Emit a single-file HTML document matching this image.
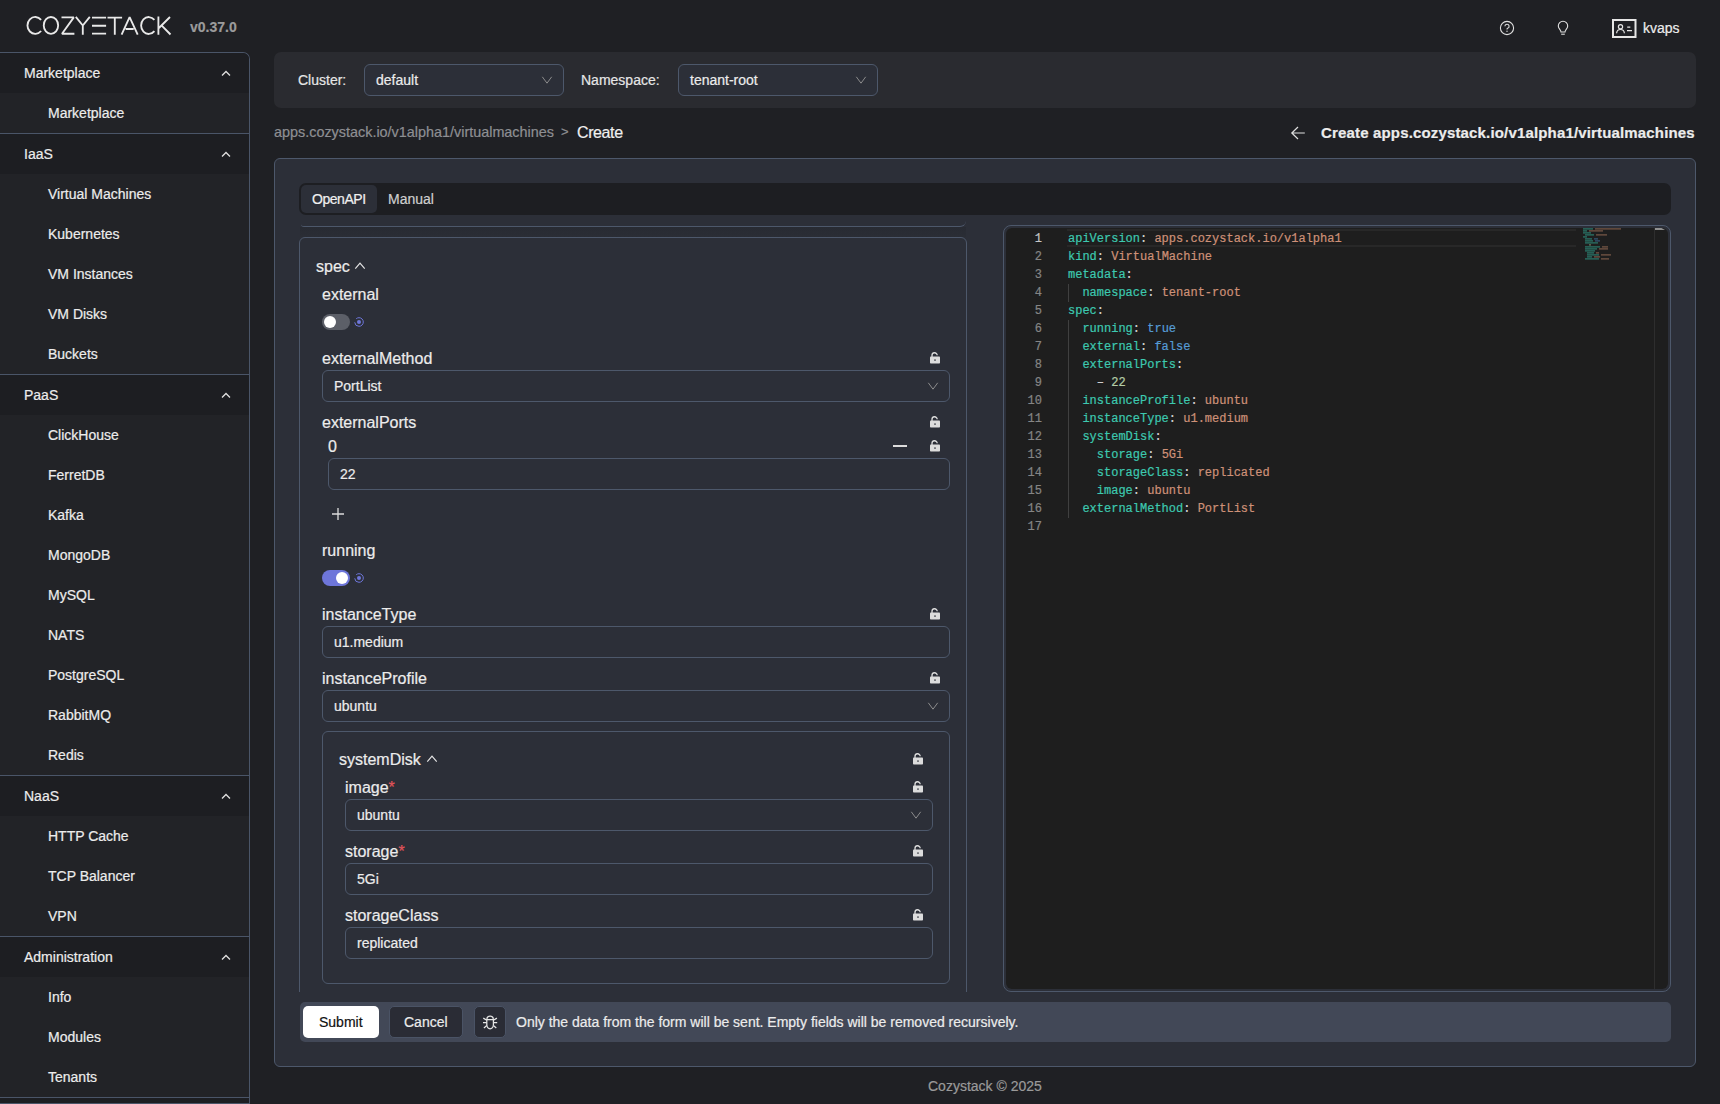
<!DOCTYPE html>
<html><head><meta charset="utf-8"><style>
*{box-sizing:border-box}
html,body{margin:0;padding:0}
body{width:1720px;height:1104px;overflow:hidden;-webkit-text-stroke:0.2px currentColor;background:#1f2024;font-family:"Liberation Sans",sans-serif;color:#e6e6e6;position:relative;font-size:14px}
.abs{position:absolute}
.t{position:absolute;white-space:nowrap;line-height:1}
#sb{position:absolute;left:0;top:52px;width:250px;height:1060px;border-right:1px solid #4a5568;border-top:1px solid #4a5568;border-top-right-radius:7px;background:#222327;overflow:hidden}
.sh{position:absolute;left:0;width:249px;height:40px;background:#1d1e22}
.sh span{position:absolute;left:24px;top:13px;font-size:14px;color:#ececec;line-height:1}
.sh svg{position:absolute;left:220px;top:16px}
.si{position:absolute;left:48px;font-size:14px;color:#ececec;line-height:1;white-space:nowrap}
.dv{position:absolute;left:0;width:249px;height:1px;background:#4a5568}
.box{position:absolute;border:1px solid #4d586b;border-radius:6px}
.inp{position:absolute;border:1px solid #4d586b;border-radius:6px;background:#2c2f38}
.inp span{position:absolute;left:11px;top:8px;font-size:14px;line-height:1;color:#ececec;white-space:nowrap}
.lbl{position:absolute;font-size:16px;line-height:1;color:#ececec;white-space:nowrap}
.req{color:#e0545a}
.ed{position:absolute;font-family:"Liberation Mono",monospace;font-size:12px;line-height:18px;white-space:pre}
.k{color:#3dc9b0}.s{color:#ce9178}.b{color:#569cd6}.n{color:#b5cea8}.p{color:#d4d4d4}
</style></head><body>

<svg class="abs" style="left:0;top:0" width="180" height="52" viewBox="0 0 180 52">
<g fill="none" stroke="#e9e9e9" stroke-width="1.85" stroke-linejoin="bevel">
<path d="M41.1 19.8 A7.8 8.45 0 1 0 41.1 31.0"/>
<ellipse cx="50.95" cy="25.4" rx="7.2" ry="8.4"/>
<path d="M61.5 17.4 H73.8 L62 33.7 H74.4"/>
<path d="M75.8 16.8 L82.8 25.5 L89.8 16.8 M82.8 25.5 V34.7"/>
<path d="M92 17.66 H106.1 M92 25.7 H106.1 M92 33.6 H106.1"/>
<path d="M107.5 17.66 H122.1 M114.8 17.66 V34.7"/>
<path d="M121.6 34.7 L129.6 17.2 L137.7 34.7 M125.6 29 H133.7"/>
<path d="M154.4 19.9 A7.6 8.45 0 1 0 154.4 31.1"/>
<path d="M158.4 16.5 V34.7 M170 17 L158.9 28 M161.5 25.3 L170.5 34.5"/>
</g>
</svg>
<div class="t" style="left:190px;top:20px;font-size:14px;font-weight:700;color:#9b9b9b">v0.37.0</div>
<svg class="abs" style="left:1498px;top:19px" width="18" height="18" viewBox="0 0 18 18"><circle cx="9" cy="9" r="6.6" fill="none" stroke="#e0e0e0" stroke-width="1.1"/><path d="M6.9 7.3 A2.1 2.1 0 1 1 9.6 9.3 C9.1 9.5 9 9.8 9 10.5" fill="none" stroke="#e0e0e0" stroke-width="1.1"/><circle cx="9" cy="12.3" r="0.7" fill="#e0e0e0"/></svg>
<svg class="abs" style="left:1554px;top:19px" width="18" height="18" viewBox="0 0 18 18"><path d="M7 13 C7 11 4.3 9.5 4.3 6.9 A4.7 4.7 0 0 1 13.7 6.9 C13.7 9.5 11 11 11 13 Z" fill="none" stroke="#e0e0e0" stroke-width="1.1"/><path d="M7.2 15.2 H10.8" stroke="#e0e0e0" stroke-width="1.1"/></svg>
<svg class="abs" style="left:1610px;top:17px" width="28" height="22" viewBox="0 0 28 22"><rect x="3" y="3" width="22.5" height="17" fill="none" stroke="#e6e6e6" stroke-width="2"/><circle cx="10.5" cy="9.7" r="2.1" fill="none" stroke="#e6e6e6" stroke-width="1.2"/><path d="M6.6 16.2 C6.8 13.6 8.4 12.5 10.5 12.5 C12.6 12.5 14.2 13.6 14.4 16.2" fill="none" stroke="#e6e6e6" stroke-width="1.2"/><path d="M17.2 10.1 H20.3 M17 13.6 H22" stroke="#e6e6e6" stroke-width="1.3"/></svg>
<div class="t" style="left:1643px;top:21px;font-size:14px;color:#ececec">kvaps</div>

<div id="sb"><div class="sh" style="top:0px"><span>Marketplace</span><svg width="12" height="8" viewBox="0 0 12 8"><path d="M2 6.5 L6 2.5 L10 6.5" fill="none" stroke="#e0e0e0" stroke-width="1.3"/></svg></div>
<div class="si" style="top:53px">Marketplace</div>
<div class="dv" style="top:80px"></div>
<div class="sh" style="top:81px"><span>IaaS</span><svg width="12" height="8" viewBox="0 0 12 8"><path d="M2 6.5 L6 2.5 L10 6.5" fill="none" stroke="#e0e0e0" stroke-width="1.3"/></svg></div>
<div class="si" style="top:134px">Virtual Machines</div>
<div class="si" style="top:174px">Kubernetes</div>
<div class="si" style="top:214px">VM Instances</div>
<div class="si" style="top:254px">VM Disks</div>
<div class="si" style="top:294px">Buckets</div>
<div class="dv" style="top:321px"></div>
<div class="sh" style="top:322px"><span>PaaS</span><svg width="12" height="8" viewBox="0 0 12 8"><path d="M2 6.5 L6 2.5 L10 6.5" fill="none" stroke="#e0e0e0" stroke-width="1.3"/></svg></div>
<div class="si" style="top:375px">ClickHouse</div>
<div class="si" style="top:415px">FerretDB</div>
<div class="si" style="top:455px">Kafka</div>
<div class="si" style="top:495px">MongoDB</div>
<div class="si" style="top:535px">MySQL</div>
<div class="si" style="top:575px">NATS</div>
<div class="si" style="top:615px">PostgreSQL</div>
<div class="si" style="top:655px">RabbitMQ</div>
<div class="si" style="top:695px">Redis</div>
<div class="dv" style="top:722px"></div>
<div class="sh" style="top:723px"><span>NaaS</span><svg width="12" height="8" viewBox="0 0 12 8"><path d="M2 6.5 L6 2.5 L10 6.5" fill="none" stroke="#e0e0e0" stroke-width="1.3"/></svg></div>
<div class="si" style="top:776px">HTTP Cache</div>
<div class="si" style="top:816px">TCP Balancer</div>
<div class="si" style="top:856px">VPN</div>
<div class="dv" style="top:883px"></div>
<div class="sh" style="top:884px"><span>Administration</span><svg width="12" height="8" viewBox="0 0 12 8"><path d="M2 6.5 L6 2.5 L10 6.5" fill="none" stroke="#e0e0e0" stroke-width="1.3"/></svg></div>
<div class="si" style="top:937px">Info</div>
<div class="si" style="top:977px">Modules</div>
<div class="si" style="top:1017px">Tenants</div>
<div class="dv" style="top:1044px"></div>
<div class="sh" style="top:1045px"></div>
<div class="dv" style="top:1050px"></div></div>
<div class="abs" style="left:274px;top:52px;width:1422px;height:56px;background:#2a2b30;border-radius:7px"></div>
<div class="t" style="left:298px;top:73px;font-size:14px;color:#e6e6e6">Cluster:</div>
<div class="inp" style="left:364px;top:64px;width:200px;height:32px"><span>default</span></div>
<svg class="abs" style="left:541px;top:76px" width="12" height="8" viewBox="0 0 12 8"><path d="M1.3 0.8 L6 7.2 L10.7 0.8" fill="none" stroke="#909090" stroke-width="0.95"/></svg>
<div class="t" style="left:581px;top:73px;font-size:14px;color:#e6e6e6">Namespace:</div>
<div class="inp" style="left:678px;top:64px;width:200px;height:32px"><span>tenant-root</span></div>
<svg class="abs" style="left:855px;top:76px" width="12" height="8" viewBox="0 0 12 8"><path d="M1.3 0.8 L6 7.2 L10.7 0.8" fill="none" stroke="#909090" stroke-width="0.95"/></svg>
<div class="t" style="left:274px;top:125px;font-size:14.4px;color:#8e8f93">apps.cozystack.io/v1alpha1/virtualmachines</div>
<div class="t" style="left:561px;top:125px;font-size:13px;color:#8e8f93">&gt;</div>
<div class="t" style="left:577px;top:125px;font-size:16px;letter-spacing:-0.4px;color:#f0f0f0">Create</div>
<svg class="abs" style="left:1290px;top:126px" width="16" height="14" viewBox="0 0 16 14"><path d="M8 1 L1.8 7 L8 13 M1.8 7 H14.8" fill="none" stroke="#e0e0e0" stroke-width="1.2"/></svg>
<div class="t" style="left:1321px;top:125px;font-size:15px;font-weight:700;letter-spacing:0.16px;color:#ececec">Create apps.cozystack.io/v1alpha1/virtualmachines</div>
<div class="abs" style="left:274px;top:158px;width:1422px;height:909px;background:#2c2f38;border:1px solid #4d586b;border-radius:6px"></div>
<div class="abs" style="left:299px;top:183px;width:1372px;height:32px;background:#1d1e22;border-radius:7px"></div>
<div class="abs" style="left:301px;top:185px;width:76px;height:28px;background:#2c2f38;border-radius:5px"></div>
<div class="t" style="left:312px;top:192px;font-size:14px;letter-spacing:-0.45px;color:#f0f0f0">OpenAPI</div>
<div class="t" style="left:388px;top:192px;font-size:14px;color:#cfcfcf">Manual</div>
<div class="abs" style="left:300px;top:1002px;width:1371px;height:40px;background:#424857;border-radius:5px"></div>
<div class="abs" style="left:303px;top:1006px;width:76px;height:32px;background:#ffffff;border-radius:5px"></div>
<div class="t" style="left:319px;top:1015px;font-size:14px;color:#111">Submit</div>
<div class="abs" style="left:389px;top:1006px;width:74px;height:32px;background:#2a2c35;border:1px solid #4a5365;border-radius:5px"></div>
<div class="t" style="left:404px;top:1015px;font-size:14px;color:#ececec">Cancel</div>
<div class="abs" style="left:474px;top:1006px;width:32px;height:32px;background:#2a2c35;border:1px solid #4a5365;border-radius:5px"></div>
<svg class="abs" style="left:481px;top:1013px" width="18" height="18" viewBox="0 0 18 18"><g fill="none" stroke="#e6e6e6" stroke-width="1.25"><path d="M5.9 6.3 A3.2 3.3 0 0 1 12.3 6.3"/><path d="M5.8 6.6 H12.4 V11.6 A3.3 4.2 0 0 1 5.8 11.6 Z"/><path d="M2 9.5 H5.8 M12.4 9.5 H16.2 M2.3 5.1 L5.8 7.3 M15.9 5.1 L12.4 7.3 M2.9 14.9 L5.8 12.5 M15.3 14.9 L12.4 12.5"/></g></svg>
<div class="t" style="left:516px;top:1015px;font-size:14px;color:#ececec">Only the data from the form will be sent. Empty fields will be removed recursively.</div>
<div class="t" style="left:928px;top:1079px;font-size:14px;color:#9a9a9a">Cozystack © 2025</div>
<div class="abs" style="left:298px;top:215px;width:670px;height:777px;overflow:hidden">
<div class="abs" style="left:3px;top:-65px;width:665px;height:77px;border-bottom:1px solid #4d586b;border-radius:0 0 6px 3px"></div>
<div class="abs" style="left:2px;top:12px;width:666px;height:10px;background:linear-gradient(#282b33,#2a2d35)"></div>
<div class="box" style="left:1px;top:22px;width:668px;height:900px;"></div>
<div class="lbl" style="left:18px;top:44px">spec</div>
<svg class="abs" style="left:56px;top:46px" width="12" height="9" viewBox="0 0 12 9"><path d="M1.3 7.6 L6 2.2 L10.7 7.6" fill="none" stroke="#e6e6e6" stroke-width="1.15"/></svg>
<div class="lbl" style="left:24px;top:72px">external</div>
<div class="abs" style="left:24px;top:99px;width:28px;height:16px;background:#5c5f68;border-radius:8px"></div>
<div class="abs" style="left:26px;top:101px;width:12px;height:12px;background:#fff;border-radius:6px"></div>
<svg class="abs" style="left:55px;top:101px" width="12" height="12" viewBox="0 0 12 12"><circle cx="6" cy="6" r="4.3" fill="none" stroke="#6e76da" stroke-width="1" stroke-dasharray="23 4" stroke-dashoffset="10.2"/><circle cx="6" cy="6" r="2" fill="#6e76da"/></svg>
<div class="lbl" style="left:24px;top:136px">externalMethod</div>
<svg class="abs" style="left:631px;top:136px" width="12" height="13" viewBox="0 0 12 13"><path d="M3 6 V4.5 A2.6 2.6 0 0 1 8.2 4.2" fill="none" stroke="#dcdcdc" stroke-width="1.3"/><rect x="1" y="5.6" width="10" height="7" rx="0.8" fill="#dcdcdc"/><rect x="5.3" y="8.4" width="1.4" height="1.4" fill="#2c2f38"/></svg>
<div class="inp" style="left:24px;top:155px;width:628px;height:32px;"><span>PortList</span></div>
<svg class="abs" style="left:629px;top:167px" width="12" height="8" viewBox="0 0 12 8"><path d="M1.3 0.8 L6 7.2 L10.7 0.8" fill="none" stroke="#909090" stroke-width="0.95"/></svg>
<div class="lbl" style="left:24px;top:200px">externalPorts</div>
<svg class="abs" style="left:631px;top:200px" width="12" height="13" viewBox="0 0 12 13"><path d="M3 6 V4.5 A2.6 2.6 0 0 1 8.2 4.2" fill="none" stroke="#dcdcdc" stroke-width="1.3"/><rect x="1" y="5.6" width="10" height="7" rx="0.8" fill="#dcdcdc"/><rect x="5.3" y="8.4" width="1.4" height="1.4" fill="#2c2f38"/></svg>
<div class="lbl" style="left:30px;top:224px">0</div>
<div class="abs" style="left:595px;top:230px;width:14px;height:2px;background:#dcdcdc"></div>
<svg class="abs" style="left:631px;top:224px" width="12" height="13" viewBox="0 0 12 13"><path d="M3 6 V4.5 A2.6 2.6 0 0 1 8.2 4.2" fill="none" stroke="#dcdcdc" stroke-width="1.3"/><rect x="1" y="5.6" width="10" height="7" rx="0.8" fill="#dcdcdc"/><rect x="5.3" y="8.4" width="1.4" height="1.4" fill="#2c2f38"/></svg>
<div class="inp" style="left:30px;top:243px;width:622px;height:32px;"><span>22</span></div>
<svg class="abs" style="left:33px;top:292px" width="14" height="14" viewBox="0 0 14 14"><path d="M7 1 V13 M1 7 H13" stroke="#dcdcdc" stroke-width="1.3"/></svg>
<div class="lbl" style="left:24px;top:328px">running</div>
<div class="abs" style="left:24px;top:355px;width:28px;height:16px;background:#6e76da;border-radius:8px"></div>
<div class="abs" style="left:38px;top:357px;width:12px;height:12px;background:#fff;border-radius:6px"></div>
<svg class="abs" style="left:55px;top:357px" width="12" height="12" viewBox="0 0 12 12"><circle cx="6" cy="6" r="4.3" fill="none" stroke="#6e76da" stroke-width="1" stroke-dasharray="23 4" stroke-dashoffset="10.2"/><circle cx="6" cy="6" r="2" fill="#6e76da"/></svg>
<div class="lbl" style="left:24px;top:392px">instanceType</div>
<svg class="abs" style="left:631px;top:392px" width="12" height="13" viewBox="0 0 12 13"><path d="M3 6 V4.5 A2.6 2.6 0 0 1 8.2 4.2" fill="none" stroke="#dcdcdc" stroke-width="1.3"/><rect x="1" y="5.6" width="10" height="7" rx="0.8" fill="#dcdcdc"/><rect x="5.3" y="8.4" width="1.4" height="1.4" fill="#2c2f38"/></svg>
<div class="inp" style="left:24px;top:411px;width:628px;height:32px;"><span>u1.medium</span></div>
<div class="lbl" style="left:24px;top:456px">instanceProfile</div>
<svg class="abs" style="left:631px;top:456px" width="12" height="13" viewBox="0 0 12 13"><path d="M3 6 V4.5 A2.6 2.6 0 0 1 8.2 4.2" fill="none" stroke="#dcdcdc" stroke-width="1.3"/><rect x="1" y="5.6" width="10" height="7" rx="0.8" fill="#dcdcdc"/><rect x="5.3" y="8.4" width="1.4" height="1.4" fill="#2c2f38"/></svg>
<div class="inp" style="left:24px;top:475px;width:628px;height:32px;"><span>ubuntu</span></div>
<svg class="abs" style="left:629px;top:487px" width="12" height="8" viewBox="0 0 12 8"><path d="M1.3 0.8 L6 7.2 L10.7 0.8" fill="none" stroke="#909090" stroke-width="0.95"/></svg>
<div class="box" style="left:24px;top:516px;width:628px;height:253px;"></div>
<div class="lbl" style="left:41px;top:537px">systemDisk</div>
<svg class="abs" style="left:128px;top:539px" width="12" height="9" viewBox="0 0 12 9"><path d="M1.3 7.6 L6 2.2 L10.7 7.6" fill="none" stroke="#e6e6e6" stroke-width="1.15"/></svg>
<svg class="abs" style="left:614px;top:537px" width="12" height="13" viewBox="0 0 12 13"><path d="M3 6 V4.5 A2.6 2.6 0 0 1 8.2 4.2" fill="none" stroke="#dcdcdc" stroke-width="1.3"/><rect x="1" y="5.6" width="10" height="7" rx="0.8" fill="#dcdcdc"/><rect x="5.3" y="8.4" width="1.4" height="1.4" fill="#2c2f38"/></svg>
<div class="lbl" style="left:47px;top:565px">image<span class="req">*</span></div>
<svg class="abs" style="left:614px;top:565px" width="12" height="13" viewBox="0 0 12 13"><path d="M3 6 V4.5 A2.6 2.6 0 0 1 8.2 4.2" fill="none" stroke="#dcdcdc" stroke-width="1.3"/><rect x="1" y="5.6" width="10" height="7" rx="0.8" fill="#dcdcdc"/><rect x="5.3" y="8.4" width="1.4" height="1.4" fill="#2c2f38"/></svg>
<div class="inp" style="left:47px;top:584px;width:588px;height:32px;"><span>ubuntu</span></div>
<svg class="abs" style="left:612px;top:596px" width="12" height="8" viewBox="0 0 12 8"><path d="M1.3 0.8 L6 7.2 L10.7 0.8" fill="none" stroke="#909090" stroke-width="0.95"/></svg>
<div class="lbl" style="left:47px;top:629px">storage<span class="req">*</span></div>
<svg class="abs" style="left:614px;top:629px" width="12" height="13" viewBox="0 0 12 13"><path d="M3 6 V4.5 A2.6 2.6 0 0 1 8.2 4.2" fill="none" stroke="#dcdcdc" stroke-width="1.3"/><rect x="1" y="5.6" width="10" height="7" rx="0.8" fill="#dcdcdc"/><rect x="5.3" y="8.4" width="1.4" height="1.4" fill="#2c2f38"/></svg>
<div class="inp" style="left:47px;top:648px;width:588px;height:32px;"><span>5Gi</span></div>
<div class="lbl" style="left:47px;top:693px">storageClass</div>
<svg class="abs" style="left:614px;top:693px" width="12" height="13" viewBox="0 0 12 13"><path d="M3 6 V4.5 A2.6 2.6 0 0 1 8.2 4.2" fill="none" stroke="#dcdcdc" stroke-width="1.3"/><rect x="1" y="5.6" width="10" height="7" rx="0.8" fill="#dcdcdc"/><rect x="5.3" y="8.4" width="1.4" height="1.4" fill="#2c2f38"/></svg>
<div class="inp" style="left:47px;top:712px;width:588px;height:32px;"><span>replicated</span></div>
</div>
<div class="abs" style="left:1003px;top:225px;width:668px;height:767px;border:1px solid #4d586b;border-radius:8px;background:#2c2f38"></div>
<div class="abs" style="left:1006px;top:228px;width:662px;height:761px;background:#1e1e1e;border-radius:6px;overflow:hidden"></div>
<div class="abs" style="left:1067px;top:229px;width:509px;height:18px;border-top:2px solid #282828;border-bottom:2px solid #282828"></div>
<div class="ed" style="left:1006px;top:230px;width:36px;text-align:right;color:#858585"><span style="color:#c6c6c6">1</span>
2
3
4
5
6
7
8
9
10
11
12
13
14
15
16
17</div>
<div class="ed" style="left:1068px;top:230px"><span class="k">apiVersion</span><span class="p">: </span><span class="s">apps.cozystack.io/v1alpha1</span>
<span class="k">kind</span><span class="p">: </span><span class="s">VirtualMachine</span>
<span class="k">metadata</span><span class="p">:</span>
  <span class="k">namespace</span><span class="p">: </span><span class="s">tenant-root</span>
<span class="k">spec</span><span class="p">:</span>
  <span class="k">running</span><span class="p">: </span><span class="b">true</span>
  <span class="k">external</span><span class="p">: </span><span class="b">false</span>
  <span class="k">externalPorts</span><span class="p">:</span>
    <span class="p">&#8211; </span><span class="n">22</span>
  <span class="k">instanceProfile</span><span class="p">: </span><span class="s">ubuntu</span>
  <span class="k">instanceType</span><span class="p">: </span><span class="s">u1.medium</span>
  <span class="k">systemDisk</span><span class="p">:</span>
    <span class="k">storage</span><span class="p">: </span><span class="s">5Gi</span>
    <span class="k">storageClass</span><span class="p">: </span><span class="s">replicated</span>
    <span class="k">image</span><span class="p">: </span><span class="s">ubuntu</span>
  <span class="k">externalMethod</span><span class="p">: </span><span class="s">PortList</span>
</div>
<div class="abs" style="left:1068px;top:284px;width:1px;height:18px;background:#404040"></div>
<div class="abs" style="left:1068px;top:320px;width:1px;height:198px;background:#404040"></div>
<svg class="abs" style="left:1583px;top:228px" width="60" height="40" viewBox="0 0 60 40"><g opacity="0.62"><rect x="0" y="0" width="0.85" height="1.7" fill="#2f9c89"/><rect x="1" y="0" width="0.85" height="1.7" fill="#2f9c89"/><rect x="2" y="0" width="0.85" height="1.7" fill="#2f9c89"/><rect x="3" y="0" width="0.85" height="1.7" fill="#2f9c89"/><rect x="4" y="0" width="0.85" height="1.7" fill="#2f9c89"/><rect x="5" y="0" width="0.85" height="1.7" fill="#2f9c89"/><rect x="6" y="0" width="0.85" height="1.7" fill="#2f9c89"/><rect x="7" y="0" width="0.85" height="1.7" fill="#2f9c89"/><rect x="8" y="0" width="0.85" height="1.7" fill="#2f9c89"/><rect x="9" y="0" width="0.85" height="1.7" fill="#2f9c89"/><rect x="12" y="0" width="0.85" height="1.7" fill="#9c6f58"/><rect x="13" y="0" width="0.85" height="1.7" fill="#9c6f58"/><rect x="14" y="0" width="0.85" height="1.7" fill="#9c6f58"/><rect x="15" y="0" width="0.85" height="1.7" fill="#9c6f58"/><rect x="16" y="0" width="0.85" height="1.7" fill="#9c6f58"/><rect x="17" y="0" width="0.85" height="1.7" fill="#9c6f58"/><rect x="18" y="0" width="0.85" height="1.7" fill="#9c6f58"/><rect x="19" y="0" width="0.85" height="1.7" fill="#9c6f58"/><rect x="20" y="0" width="0.85" height="1.7" fill="#9c6f58"/><rect x="21" y="0" width="0.85" height="1.7" fill="#9c6f58"/><rect x="22" y="0" width="0.85" height="1.7" fill="#9c6f58"/><rect x="23" y="0" width="0.85" height="1.7" fill="#9c6f58"/><rect x="24" y="0" width="0.85" height="1.7" fill="#9c6f58"/><rect x="25" y="0" width="0.85" height="1.7" fill="#9c6f58"/><rect x="26" y="0" width="0.85" height="1.7" fill="#9c6f58"/><rect x="27" y="0" width="0.85" height="1.7" fill="#9c6f58"/><rect x="28" y="0" width="0.85" height="1.7" fill="#9c6f58"/><rect x="29" y="0" width="0.85" height="1.7" fill="#9c6f58"/><rect x="30" y="0" width="0.85" height="1.7" fill="#9c6f58"/><rect x="31" y="0" width="0.85" height="1.7" fill="#9c6f58"/><rect x="32" y="0" width="0.85" height="1.7" fill="#9c6f58"/><rect x="33" y="0" width="0.85" height="1.7" fill="#9c6f58"/><rect x="34" y="0" width="0.85" height="1.7" fill="#9c6f58"/><rect x="35" y="0" width="0.85" height="1.7" fill="#9c6f58"/><rect x="36" y="0" width="0.85" height="1.7" fill="#9c6f58"/><rect x="37" y="0" width="0.85" height="1.7" fill="#9c6f58"/><rect x="0" y="2" width="0.85" height="1.7" fill="#2f9c89"/><rect x="1" y="2" width="0.85" height="1.7" fill="#2f9c89"/><rect x="2" y="2" width="0.85" height="1.7" fill="#2f9c89"/><rect x="3" y="2" width="0.85" height="1.7" fill="#2f9c89"/><rect x="6" y="2" width="0.85" height="1.7" fill="#9c6f58"/><rect x="7" y="2" width="0.85" height="1.7" fill="#9c6f58"/><rect x="8" y="2" width="0.85" height="1.7" fill="#9c6f58"/><rect x="9" y="2" width="0.85" height="1.7" fill="#9c6f58"/><rect x="10" y="2" width="0.85" height="1.7" fill="#9c6f58"/><rect x="11" y="2" width="0.85" height="1.7" fill="#9c6f58"/><rect x="12" y="2" width="0.85" height="1.7" fill="#9c6f58"/><rect x="13" y="2" width="0.85" height="1.7" fill="#9c6f58"/><rect x="14" y="2" width="0.85" height="1.7" fill="#9c6f58"/><rect x="15" y="2" width="0.85" height="1.7" fill="#9c6f58"/><rect x="16" y="2" width="0.85" height="1.7" fill="#9c6f58"/><rect x="17" y="2" width="0.85" height="1.7" fill="#9c6f58"/><rect x="18" y="2" width="0.85" height="1.7" fill="#9c6f58"/><rect x="19" y="2" width="0.85" height="1.7" fill="#9c6f58"/><rect x="0" y="4" width="0.85" height="1.7" fill="#2f9c89"/><rect x="1" y="4" width="0.85" height="1.7" fill="#2f9c89"/><rect x="2" y="4" width="0.85" height="1.7" fill="#2f9c89"/><rect x="3" y="4" width="0.85" height="1.7" fill="#2f9c89"/><rect x="4" y="4" width="0.85" height="1.7" fill="#2f9c89"/><rect x="5" y="4" width="0.85" height="1.7" fill="#2f9c89"/><rect x="6" y="4" width="0.85" height="1.7" fill="#2f9c89"/><rect x="7" y="4" width="0.85" height="1.7" fill="#2f9c89"/><rect x="2" y="6" width="0.85" height="1.7" fill="#2f9c89"/><rect x="3" y="6" width="0.85" height="1.7" fill="#2f9c89"/><rect x="4" y="6" width="0.85" height="1.7" fill="#2f9c89"/><rect x="5" y="6" width="0.85" height="1.7" fill="#2f9c89"/><rect x="6" y="6" width="0.85" height="1.7" fill="#2f9c89"/><rect x="7" y="6" width="0.85" height="1.7" fill="#2f9c89"/><rect x="8" y="6" width="0.85" height="1.7" fill="#2f9c89"/><rect x="9" y="6" width="0.85" height="1.7" fill="#2f9c89"/><rect x="10" y="6" width="0.85" height="1.7" fill="#2f9c89"/><rect x="13" y="6" width="0.85" height="1.7" fill="#9c6f58"/><rect x="14" y="6" width="0.85" height="1.7" fill="#9c6f58"/><rect x="15" y="6" width="0.85" height="1.7" fill="#9c6f58"/><rect x="16" y="6" width="0.85" height="1.7" fill="#9c6f58"/><rect x="17" y="6" width="0.85" height="1.7" fill="#9c6f58"/><rect x="18" y="6" width="0.85" height="1.7" fill="#9c6f58"/><rect x="19" y="6" width="0.85" height="1.7" fill="#9c6f58"/><rect x="20" y="6" width="0.85" height="1.7" fill="#9c6f58"/><rect x="21" y="6" width="0.85" height="1.7" fill="#9c6f58"/><rect x="22" y="6" width="0.85" height="1.7" fill="#9c6f58"/><rect x="23" y="6" width="0.85" height="1.7" fill="#9c6f58"/><rect x="0" y="8" width="0.85" height="1.7" fill="#2f9c89"/><rect x="1" y="8" width="0.85" height="1.7" fill="#2f9c89"/><rect x="2" y="8" width="0.85" height="1.7" fill="#2f9c89"/><rect x="3" y="8" width="0.85" height="1.7" fill="#2f9c89"/><rect x="2" y="10" width="0.85" height="1.7" fill="#2f9c89"/><rect x="3" y="10" width="0.85" height="1.7" fill="#2f9c89"/><rect x="4" y="10" width="0.85" height="1.7" fill="#2f9c89"/><rect x="5" y="10" width="0.85" height="1.7" fill="#2f9c89"/><rect x="6" y="10" width="0.85" height="1.7" fill="#2f9c89"/><rect x="7" y="10" width="0.85" height="1.7" fill="#2f9c89"/><rect x="8" y="10" width="0.85" height="1.7" fill="#2f9c89"/><rect x="11" y="10" width="0.85" height="1.7" fill="#3f6f9c"/><rect x="12" y="10" width="0.85" height="1.7" fill="#3f6f9c"/><rect x="13" y="10" width="0.85" height="1.7" fill="#3f6f9c"/><rect x="14" y="10" width="0.85" height="1.7" fill="#3f6f9c"/><rect x="2" y="12" width="0.85" height="1.7" fill="#2f9c89"/><rect x="3" y="12" width="0.85" height="1.7" fill="#2f9c89"/><rect x="4" y="12" width="0.85" height="1.7" fill="#2f9c89"/><rect x="5" y="12" width="0.85" height="1.7" fill="#2f9c89"/><rect x="6" y="12" width="0.85" height="1.7" fill="#2f9c89"/><rect x="7" y="12" width="0.85" height="1.7" fill="#2f9c89"/><rect x="8" y="12" width="0.85" height="1.7" fill="#2f9c89"/><rect x="9" y="12" width="0.85" height="1.7" fill="#2f9c89"/><rect x="12" y="12" width="0.85" height="1.7" fill="#3f6f9c"/><rect x="13" y="12" width="0.85" height="1.7" fill="#3f6f9c"/><rect x="14" y="12" width="0.85" height="1.7" fill="#3f6f9c"/><rect x="15" y="12" width="0.85" height="1.7" fill="#3f6f9c"/><rect x="16" y="12" width="0.85" height="1.7" fill="#3f6f9c"/><rect x="2" y="14" width="0.85" height="1.7" fill="#2f9c89"/><rect x="3" y="14" width="0.85" height="1.7" fill="#2f9c89"/><rect x="4" y="14" width="0.85" height="1.7" fill="#2f9c89"/><rect x="5" y="14" width="0.85" height="1.7" fill="#2f9c89"/><rect x="6" y="14" width="0.85" height="1.7" fill="#2f9c89"/><rect x="7" y="14" width="0.85" height="1.7" fill="#2f9c89"/><rect x="8" y="14" width="0.85" height="1.7" fill="#2f9c89"/><rect x="9" y="14" width="0.85" height="1.7" fill="#2f9c89"/><rect x="10" y="14" width="0.85" height="1.7" fill="#2f9c89"/><rect x="11" y="14" width="0.85" height="1.7" fill="#2f9c89"/><rect x="12" y="14" width="0.85" height="1.7" fill="#2f9c89"/><rect x="13" y="14" width="0.85" height="1.7" fill="#2f9c89"/><rect x="14" y="14" width="0.85" height="1.7" fill="#2f9c89"/><rect x="6" y="16" width="0.85" height="1.7" fill="#8a9c7a"/><rect x="7" y="16" width="0.85" height="1.7" fill="#8a9c7a"/><rect x="2" y="18" width="0.85" height="1.7" fill="#2f9c89"/><rect x="3" y="18" width="0.85" height="1.7" fill="#2f9c89"/><rect x="4" y="18" width="0.85" height="1.7" fill="#2f9c89"/><rect x="5" y="18" width="0.85" height="1.7" fill="#2f9c89"/><rect x="6" y="18" width="0.85" height="1.7" fill="#2f9c89"/><rect x="7" y="18" width="0.85" height="1.7" fill="#2f9c89"/><rect x="8" y="18" width="0.85" height="1.7" fill="#2f9c89"/><rect x="9" y="18" width="0.85" height="1.7" fill="#2f9c89"/><rect x="10" y="18" width="0.85" height="1.7" fill="#2f9c89"/><rect x="11" y="18" width="0.85" height="1.7" fill="#2f9c89"/><rect x="12" y="18" width="0.85" height="1.7" fill="#2f9c89"/><rect x="13" y="18" width="0.85" height="1.7" fill="#2f9c89"/><rect x="14" y="18" width="0.85" height="1.7" fill="#2f9c89"/><rect x="15" y="18" width="0.85" height="1.7" fill="#2f9c89"/><rect x="16" y="18" width="0.85" height="1.7" fill="#2f9c89"/><rect x="19" y="18" width="0.85" height="1.7" fill="#9c6f58"/><rect x="20" y="18" width="0.85" height="1.7" fill="#9c6f58"/><rect x="21" y="18" width="0.85" height="1.7" fill="#9c6f58"/><rect x="22" y="18" width="0.85" height="1.7" fill="#9c6f58"/><rect x="23" y="18" width="0.85" height="1.7" fill="#9c6f58"/><rect x="24" y="18" width="0.85" height="1.7" fill="#9c6f58"/><rect x="2" y="20" width="0.85" height="1.7" fill="#2f9c89"/><rect x="3" y="20" width="0.85" height="1.7" fill="#2f9c89"/><rect x="4" y="20" width="0.85" height="1.7" fill="#2f9c89"/><rect x="5" y="20" width="0.85" height="1.7" fill="#2f9c89"/><rect x="6" y="20" width="0.85" height="1.7" fill="#2f9c89"/><rect x="7" y="20" width="0.85" height="1.7" fill="#2f9c89"/><rect x="8" y="20" width="0.85" height="1.7" fill="#2f9c89"/><rect x="9" y="20" width="0.85" height="1.7" fill="#2f9c89"/><rect x="10" y="20" width="0.85" height="1.7" fill="#2f9c89"/><rect x="11" y="20" width="0.85" height="1.7" fill="#2f9c89"/><rect x="12" y="20" width="0.85" height="1.7" fill="#2f9c89"/><rect x="13" y="20" width="0.85" height="1.7" fill="#2f9c89"/><rect x="16" y="20" width="0.85" height="1.7" fill="#9c6f58"/><rect x="17" y="20" width="0.85" height="1.7" fill="#9c6f58"/><rect x="18" y="20" width="0.85" height="1.7" fill="#9c6f58"/><rect x="19" y="20" width="0.85" height="1.7" fill="#9c6f58"/><rect x="20" y="20" width="0.85" height="1.7" fill="#9c6f58"/><rect x="21" y="20" width="0.85" height="1.7" fill="#9c6f58"/><rect x="22" y="20" width="0.85" height="1.7" fill="#9c6f58"/><rect x="23" y="20" width="0.85" height="1.7" fill="#9c6f58"/><rect x="24" y="20" width="0.85" height="1.7" fill="#9c6f58"/><rect x="2" y="22" width="0.85" height="1.7" fill="#2f9c89"/><rect x="3" y="22" width="0.85" height="1.7" fill="#2f9c89"/><rect x="4" y="22" width="0.85" height="1.7" fill="#2f9c89"/><rect x="5" y="22" width="0.85" height="1.7" fill="#2f9c89"/><rect x="6" y="22" width="0.85" height="1.7" fill="#2f9c89"/><rect x="7" y="22" width="0.85" height="1.7" fill="#2f9c89"/><rect x="8" y="22" width="0.85" height="1.7" fill="#2f9c89"/><rect x="9" y="22" width="0.85" height="1.7" fill="#2f9c89"/><rect x="10" y="22" width="0.85" height="1.7" fill="#2f9c89"/><rect x="11" y="22" width="0.85" height="1.7" fill="#2f9c89"/><rect x="4" y="24" width="0.85" height="1.7" fill="#2f9c89"/><rect x="5" y="24" width="0.85" height="1.7" fill="#2f9c89"/><rect x="6" y="24" width="0.85" height="1.7" fill="#2f9c89"/><rect x="7" y="24" width="0.85" height="1.7" fill="#2f9c89"/><rect x="8" y="24" width="0.85" height="1.7" fill="#2f9c89"/><rect x="9" y="24" width="0.85" height="1.7" fill="#2f9c89"/><rect x="10" y="24" width="0.85" height="1.7" fill="#2f9c89"/><rect x="13" y="24" width="0.85" height="1.7" fill="#9c6f58"/><rect x="14" y="24" width="0.85" height="1.7" fill="#9c6f58"/><rect x="15" y="24" width="0.85" height="1.7" fill="#9c6f58"/><rect x="4" y="26" width="0.85" height="1.7" fill="#2f9c89"/><rect x="5" y="26" width="0.85" height="1.7" fill="#2f9c89"/><rect x="6" y="26" width="0.85" height="1.7" fill="#2f9c89"/><rect x="7" y="26" width="0.85" height="1.7" fill="#2f9c89"/><rect x="8" y="26" width="0.85" height="1.7" fill="#2f9c89"/><rect x="9" y="26" width="0.85" height="1.7" fill="#2f9c89"/><rect x="10" y="26" width="0.85" height="1.7" fill="#2f9c89"/><rect x="11" y="26" width="0.85" height="1.7" fill="#2f9c89"/><rect x="12" y="26" width="0.85" height="1.7" fill="#2f9c89"/><rect x="13" y="26" width="0.85" height="1.7" fill="#2f9c89"/><rect x="14" y="26" width="0.85" height="1.7" fill="#2f9c89"/><rect x="15" y="26" width="0.85" height="1.7" fill="#2f9c89"/><rect x="18" y="26" width="0.85" height="1.7" fill="#9c6f58"/><rect x="19" y="26" width="0.85" height="1.7" fill="#9c6f58"/><rect x="20" y="26" width="0.85" height="1.7" fill="#9c6f58"/><rect x="21" y="26" width="0.85" height="1.7" fill="#9c6f58"/><rect x="22" y="26" width="0.85" height="1.7" fill="#9c6f58"/><rect x="23" y="26" width="0.85" height="1.7" fill="#9c6f58"/><rect x="24" y="26" width="0.85" height="1.7" fill="#9c6f58"/><rect x="25" y="26" width="0.85" height="1.7" fill="#9c6f58"/><rect x="26" y="26" width="0.85" height="1.7" fill="#9c6f58"/><rect x="27" y="26" width="0.85" height="1.7" fill="#9c6f58"/><rect x="4" y="28" width="0.85" height="1.7" fill="#2f9c89"/><rect x="5" y="28" width="0.85" height="1.7" fill="#2f9c89"/><rect x="6" y="28" width="0.85" height="1.7" fill="#2f9c89"/><rect x="7" y="28" width="0.85" height="1.7" fill="#2f9c89"/><rect x="8" y="28" width="0.85" height="1.7" fill="#2f9c89"/><rect x="11" y="28" width="0.85" height="1.7" fill="#9c6f58"/><rect x="12" y="28" width="0.85" height="1.7" fill="#9c6f58"/><rect x="13" y="28" width="0.85" height="1.7" fill="#9c6f58"/><rect x="14" y="28" width="0.85" height="1.7" fill="#9c6f58"/><rect x="15" y="28" width="0.85" height="1.7" fill="#9c6f58"/><rect x="16" y="28" width="0.85" height="1.7" fill="#9c6f58"/><rect x="2" y="30" width="0.85" height="1.7" fill="#2f9c89"/><rect x="3" y="30" width="0.85" height="1.7" fill="#2f9c89"/><rect x="4" y="30" width="0.85" height="1.7" fill="#2f9c89"/><rect x="5" y="30" width="0.85" height="1.7" fill="#2f9c89"/><rect x="6" y="30" width="0.85" height="1.7" fill="#2f9c89"/><rect x="7" y="30" width="0.85" height="1.7" fill="#2f9c89"/><rect x="8" y="30" width="0.85" height="1.7" fill="#2f9c89"/><rect x="9" y="30" width="0.85" height="1.7" fill="#2f9c89"/><rect x="10" y="30" width="0.85" height="1.7" fill="#2f9c89"/><rect x="11" y="30" width="0.85" height="1.7" fill="#2f9c89"/><rect x="12" y="30" width="0.85" height="1.7" fill="#2f9c89"/><rect x="13" y="30" width="0.85" height="1.7" fill="#2f9c89"/><rect x="14" y="30" width="0.85" height="1.7" fill="#2f9c89"/><rect x="15" y="30" width="0.85" height="1.7" fill="#2f9c89"/><rect x="18" y="30" width="0.85" height="1.7" fill="#9c6f58"/><rect x="19" y="30" width="0.85" height="1.7" fill="#9c6f58"/><rect x="20" y="30" width="0.85" height="1.7" fill="#9c6f58"/><rect x="21" y="30" width="0.85" height="1.7" fill="#9c6f58"/><rect x="22" y="30" width="0.85" height="1.7" fill="#9c6f58"/><rect x="23" y="30" width="0.85" height="1.7" fill="#9c6f58"/><rect x="24" y="30" width="0.85" height="1.7" fill="#9c6f58"/><rect x="25" y="30" width="0.85" height="1.7" fill="#9c6f58"/></g></svg>
<div class="abs" style="left:1654px;top:228px;width:1px;height:761px;background:#2e2e2e"></div>
<div class="abs" style="left:1655px;top:228px;width:10px;height:2px;background:#909090;clip-path:polygon(0 0,65% 0,100% 100%,0 100%)"></div>
</body></html>
